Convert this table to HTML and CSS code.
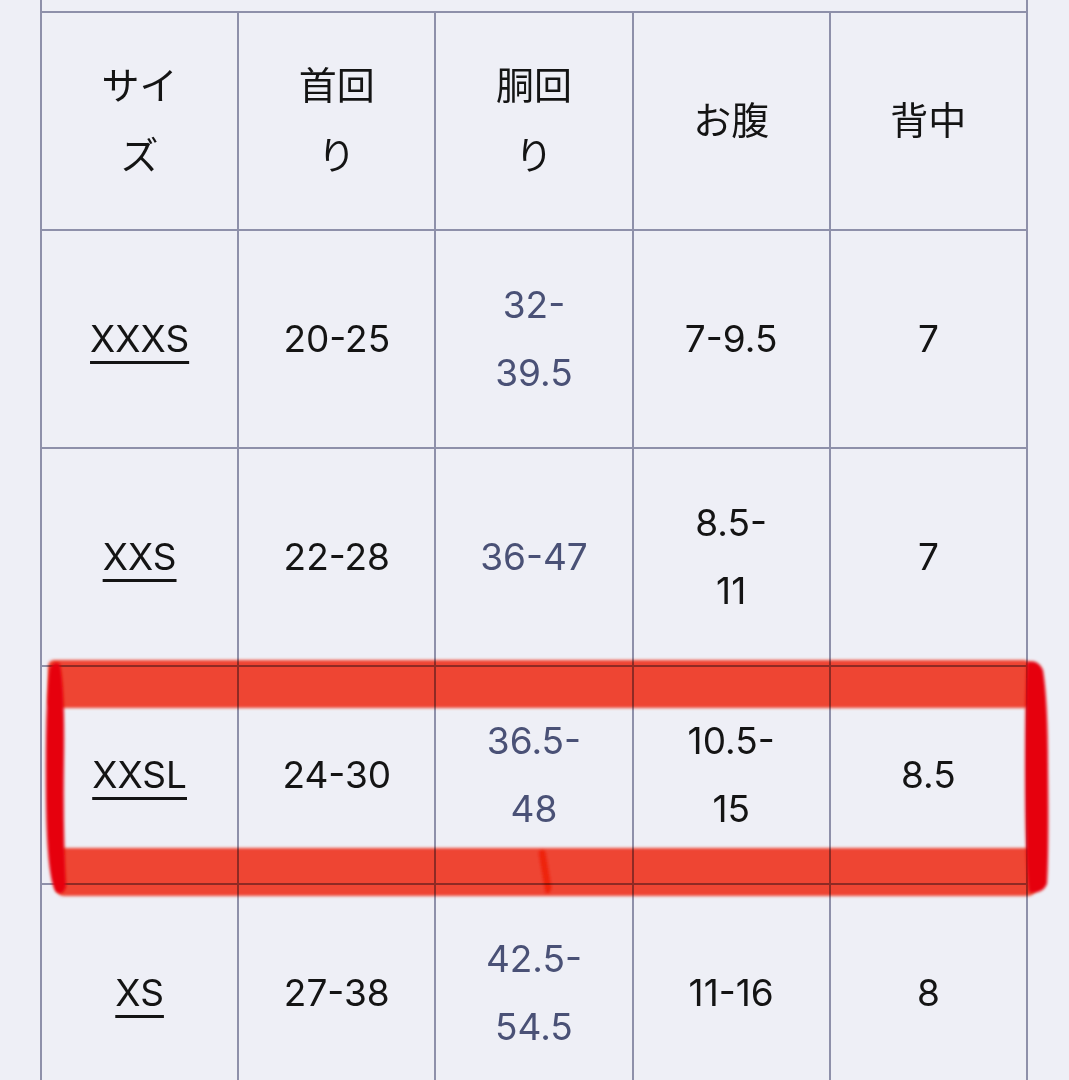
FILE: index.html
```html
<!DOCTYPE html>
<html lang="ja">
<head>
<meta charset="utf-8">
<title>サイズ表</title>
<link rel="stylesheet" href="styles.css">
</head>
<body>
<div class="page">
  <table class="size-table">
    <colgroup>
      <col class="c"><col class="c"><col class="c"><col class="c"><col class="c">
    </colgroup>
    <tr class="tail"><td colspan="5"></td></tr>
    <tr class="row head">
      <th>サイ<br>ズ</th>
      <th>首回<br>り</th>
      <th>胴回<br>り</th>
      <th>お腹</th>
      <th>背中</th>
    </tr>
    <tr class="row">
      <td><a class="size-link">XXXS</a></td>
      <td>20-25</td>
      <td class="waist">32-<br>39.5</td>
      <td>7-9.5</td>
      <td>7</td>
    </tr>
    <tr class="row">
      <td><a class="size-link">XXS</a></td>
      <td>22-28</td>
      <td class="waist">36-47</td>
      <td>8.5-<br>11</td>
      <td>7</td>
    </tr>
    <tr class="row">
      <td><a class="size-link">XXSL</a></td>
      <td>24-30</td>
      <td class="waist">36.5-<br>48</td>
      <td>10.5-<br>15</td>
      <td>8.5</td>
    </tr>
    <tr class="row">
      <td><a class="size-link">XS</a></td>
      <td>27-38</td>
      <td class="waist">42.5-<br>54.5</td>
      <td>11-16</td>
      <td>8</td>
    </tr>
  </table>

  <svg class="marker" width="1069" height="1080" viewBox="0 0 1069 1080" aria-hidden="true">
    <defs>
      <filter id="soft" x="-5%" y="-5%" width="110%" height="110%">
        <feGaussianBlur stdDeviation="1.4"/>
      </filter>
    </defs>
    <g class="bands" filter="url(#soft)">
      <rect x="48" y="660" width="982" height="48" rx="6" fill="rgb(255,74,52)"/>
      <rect x="56" y="848" width="980" height="48" rx="8" fill="rgb(255,74,52)"/>
      <path d="M538 852 Q543 846 546 852 L552 888 Q550 896 545 893 Z" fill="rgb(255,40,10)"/>
    </g>
    <g filter="url(#soft)">
      <path d="M50 668 Q54 660 60 664 Q65 690 64 760 Q63 830 66 886 Q64 896 56 892 Q47 880 46 800 Q45 700 50 668 Z" fill="#e6000a"/>
      <path d="M1027 662 Q1038 659 1043 670 Q1048 700 1048 770 Q1049 850 1047 884 Q1042 895 1029 892 Q1025 860 1025 770 Q1025 700 1027 662 Z" fill="#e6000a"/>
    </g>
  </svg>
</div>
</body>
</html>
```

FILE: styles.css
```css
html, body {
  margin: 0;
  padding: 0;
  background: #eeeff6;
  overflow: hidden;
}

.page {
  position: relative;
  width: 1069px;
  height: 1080px;
  overflow: hidden;
  padding-left: 40px;
  box-sizing: border-box;
}

.size-table {
  border-collapse: collapse;
  table-layout: fixed;
  width: 988px;
  font-family: "Inter", "Noto Sans CJK JP", sans-serif;
  font-size: 37px;
  line-height: 68px;
  color: #141414;
}

.size-table .c {
  width: 197px;
}

.size-table th,
.size-table td {
  border: 2px solid #8e90aa;
  padding: 0;
  text-align: center;
  vertical-align: middle;
  font-weight: normal;
}

.size-table th {
  font-family: "Noto Sans CJK JP", "Inter", sans-serif;
  font-size: 38px;
  line-height: 70px;
  padding-bottom: 6px;
}

.tail td {
  border-top: none;
  height: 11px;
}

.row {
  height: 218px;
}

.waist {
  color: #4a5176;
}

.size-link {
  color: #141414;
  text-decoration: underline;
  text-decoration-thickness: 3px;
  text-underline-offset: 9px;
}

.marker {
  position: absolute;
  left: 0;
  top: 0;
  pointer-events: none;
}

.bands {
  mix-blend-mode: multiply;
}
```
